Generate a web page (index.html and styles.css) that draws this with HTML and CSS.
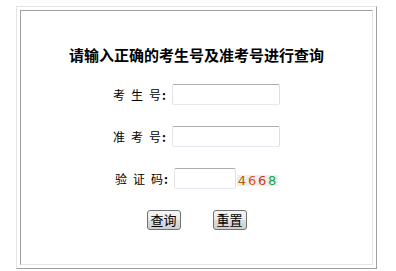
FILE: index.html
```html
<!DOCTYPE html>
<html lang="zh-CN">
<head>
<meta charset="utf-8">
<title>查询</title>
<link rel="stylesheet" href="styles.css">
</head>
<body>
<div class="frame">
  <div class="cell">
    <h1 class="title">请输入正确的考生号及准考号进行查询</h1>
    <div class="row">
      <span class="label"><span class="sp">考生</span>号<span class="colon">:</span></span>
      <input class="field" type="text">
    </div>
    <div class="row">
      <span class="label"><span class="sp">准考</span>号<span class="colon">:</span></span>
      <input class="field" type="text">
    </div>
    <div class="row">
      <span class="label"><span class="sp">验证</span>码<span class="colon">:</span></span>
      <input class="field short" type="text">
      <span class="code"><span class="c1">4</span><span class="c2">6</span><span class="c3">6</span><span class="c4">8</span></span>
    </div>
    <div class="buttons">
      <button class="btn" type="button">查询</button>
      <button class="btn" type="button">重置</button>
    </div>
  </div>
</div>
</body>
</html>
```

FILE: styles.css
```css
html, body {
  margin: 0;
  padding: 0;
  background: #ffffff;
}
body {
  font-family: "Noto Sans CJK SC", "Liberation Sans", sans-serif;
  color: #000;
}
.frame {
  box-sizing: border-box;
  width: 361px;
  height: 263px;
  margin: 6px 0 0 16px;
  padding: 3px;
  border: 1px solid;
  border-color: #e4e4e4 #a0a0a0 #a0a0a0 #e4e4e4;
}
.cell {
  box-sizing: border-box;
  height: 100%;
  border: 1px solid;
  border-color: #a0a0a0 #e4e4e4 #e4e4e4 #a0a0a0;
  display: flex;
  flex-direction: column;
  align-items: center;
}
.title {
  margin: 34px 0 0 0;
  height: 20px;
  line-height: 20px;
  font-size: 15px;
  font-weight: bold;
  letter-spacing: 0;
}
.row {
  display: flex;
  align-items: center;
  height: 21px;
  margin-top: 19px;
}
.row + .row {
  margin-top: 21px;
}
.label {
  font-size: 12px;
  line-height: 21px;
  letter-spacing: 1px;
  margin-right: 6px;
}
.sp {
  letter-spacing: 6px;
}
.colon {
  font-weight: bold;
  letter-spacing: 0;
}
.field {
  box-sizing: border-box;
  width: 108px;
  height: 21px;
  margin: 0;
  padding: 0 2px;
  border: 1px solid;
  border-color: #abadb3 #dbdfe6 #e3e9ef #e2e3ea;
  border-radius: 2px;
  background: #fff;
  font-size: 12px;
}
.field.short {
  width: 62px;
}
.code {
  margin-left: 1px;
  background: #eeeeee;
  font-family: "DejaVu Sans", "Liberation Sans", sans-serif;
  font-size: 13px;
  line-height: 11px;
  height: 11px;
  padding: 0 0 0 1px;
  letter-spacing: 1.8px;
  margin-top: 3px;
}
.c1 { color: #b45a00; }
.c2 { color: #dc5418; }
.c3 { color: #cc3c10; }
.c4 { color: #12a64a; }
.buttons {
  display: flex;
  gap: 32px;
  margin-top: 21px;
}
.btn {
  box-sizing: border-box;
  width: 34px;
  height: 20px;
  padding: 0;
  margin: 0;
  border: 1px solid #707070;
  border-radius: 3px;
  background: linear-gradient(#f4f4f4 0%, #ebebeb 50%, #dddddd 51%, #cfcfcf 100%);
  font-family: "Noto Sans CJK SC", sans-serif;
  font-size: 13px;
  line-height: 18px;
  color: #000;
}
```
